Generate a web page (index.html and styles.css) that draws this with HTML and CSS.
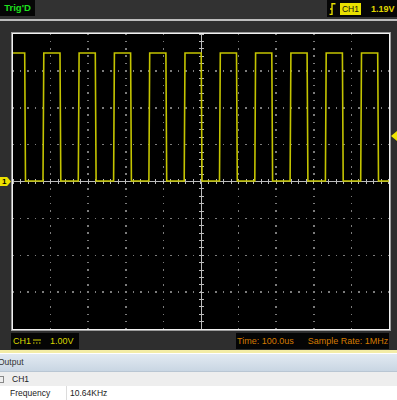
FILE: index.html
```html
<!DOCTYPE html>
<html lang="en">
<head>
  <meta charset="UTF-8">
  <title>Oscilloscope</title>
  <link rel="stylesheet" href="styles.css">
</head>
<body>

<div class="scope">
  <div class="topbar">
    <div class="trig">Trig'D</div>
    <div class="trigger-info">
      <svg class="edge-icon" width="7" height="12" viewBox="0 0 7 12">
        <path d="M0.5 11.5 H3 V0.8 H6.5" fill="none" stroke="#e8e000" stroke-width="1.4"/>
        <path d="M1 6 H3" stroke="#e8e000" stroke-width="1.4"/>
      </svg>
      <span class="ch-badge">CH1</span>
      <span class="level">1.19V</span>
    </div>
  </div>

  <div class="screen-area">
    <div class="screen">
      <div class="screen-inner">
        <svg class="grid" width="376" height="295" viewBox="0 0 376 295">
          <g stroke="#7c7c7c" stroke-width="1.5" shape-rendering="crispEdges">
            <g stroke-dasharray="1.5 5.875" stroke-dashoffset="0.75">
              <line x1="37.6" y1="0" x2="37.6" y2="295"/>
              <line x1="75.2" y1="0" x2="75.2" y2="295"/>
              <line x1="112.8" y1="0" x2="112.8" y2="295"/>
              <line x1="150.4" y1="0" x2="150.4" y2="295"/>
              <line x1="225.6" y1="0" x2="225.6" y2="295"/>
              <line x1="263.2" y1="0" x2="263.2" y2="295"/>
              <line x1="300.8" y1="0" x2="300.8" y2="295"/>
              <line x1="338.4" y1="0" x2="338.4" y2="295"/>
            </g>
            <g stroke-dasharray="1.5 6.02" stroke-dashoffset="0.75">
              <line x1="0" y1="36.9" x2="376" y2="36.9"/>
              <line x1="0" y1="73.75" x2="376" y2="73.75"/>
              <line x1="0" y1="110.6" x2="376" y2="110.6"/>
              <line x1="0" y1="184.4" x2="376" y2="184.4"/>
              <line x1="0" y1="221.25" x2="376" y2="221.25"/>
              <line x1="0" y1="258.1" x2="376" y2="258.1"/>
            </g>
          </g>
          <!-- center axes with minor ticks -->
          <g stroke="#bcbcbc" shape-rendering="crispEdges">
            <line x1="0" y1="147.5" x2="376" y2="147.5" stroke-width="1"/>
            <line x1="188" y1="0" x2="188" y2="295" stroke-width="1"/>
            <line x1="0" y1="147.5" x2="376" y2="147.5" stroke-width="5" stroke-dasharray="1 6.52" stroke-dashoffset="0.5"/>
            <line x1="188" y1="0" x2="188" y2="295" stroke-width="5" stroke-dasharray="1 6.375" stroke-dashoffset="0.5"/>
          </g>
          <path class="wave" d="M0,19 H11.7 L12.5,147 H30 L30.8,19 H47 L47.8,147 H65.3 L66.1,19 H82.3 L83.1,147 H100.6 L101.4,19 H117.6 L118.4,147 H135.9 L136.7,19 H152.9 L153.7,147 H171.2 L172,19 H188.2 L189,147 H206.5 L207.3,19 H223.5 L224.3,147 H241.8 L242.6,19 H258.8 L259.6,147 H277.1 L277.9,19 H294.1 L294.9,147 H312.4 L313.2,19 H329.4 L330.2,147 H347.7 L348.5,19 H364.7 L365.5,147 H376"/>
        </svg>
      </div>
    </div>
    <span class="ch-marker">1</span>
    <span class="trig-marker"></span>
  </div>

  <div class="readouts">
    <div class="ch-scale">
      <span>CH1</span>
      <svg class="dc-icon" width="8" height="5" viewBox="0 0 8 5">
        <line x1="0" y1="1" x2="8" y2="1" stroke="#d8d800" stroke-width="1"/>
        <line x1="0" y1="4" x2="8" y2="4" stroke="#d8d800" stroke-width="1" stroke-dasharray="1.5 1.5"/>
      </svg>
      <span class="volts">1.00V</span>
    </div>
    <div class="timebase">
      <span>Time: 100.0us</span>
      <span>Sample Rate: 1MHz</span>
    </div>
  </div>
</div>

<div class="output">
  <div class="output-head">Output</div>
  <div class="row group-row">
    <span class="collapse-box"></span>
    <span>CH1</span>
  </div>
  <div class="row prop-row">
    <span class="prop-name">Frequency</span>
    <span class="prop-value">10.64KHz</span>
  </div>
</div>

</body>
</html>
```

FILE: styles.css
```css
body {
  margin: 0;
  width: 397px;
  height: 400px;
  overflow: hidden;
  background: #fff;
  font-family: "Liberation Sans", Arial, sans-serif;
}

.scope {
  background: #2e2e2e;
  height: 350px;
  display: flex;
  flex-direction: column;
}

.topbar {
  height: 19px;
  display: flex;
  justify-content: space-between;
  align-items: flex-start;
  background: #323232;
  border-bottom: 2px solid #bdbdbd;
}

.trig {
  width: 35px;
  height: 16px;
  line-height: 16px;
  background: #060606;
  color: #1ee01e;
  font-size: 9.5px;
  font-weight: bold;
  text-align: center;
}

.trigger-info {
  width: 70px;
  height: 17px;
  background: #060606;
  display: flex;
  align-items: center;
  padding-left: 2px;
  box-sizing: border-box;
}

.edge-icon {
  display: block;
}

.ch-badge {
  margin-left: 4px;
  width: 21px;
  height: 12px;
  line-height: 12px;
  background: #e8e000;
  color: #111;
  font-size: 8.5px;
  text-align: center;
}

.level {
  margin-left: 10px;
  color: #e0d800;
  font-size: 9px;
  font-weight: bold;
}

.screen-area {
  position: relative;
  padding: 11px 0 0 11px;
}

.screen {
  width: 378px;
  border: 1px solid #9c9c9c;
}

.screen-inner {
  border: 1px solid #f2f2f2;
  background: #000;
  height: 295px;
}

.grid {
  display: block;
}

.wave {
  fill: none;
  stroke: #c4c400;
  stroke-width: 1.6;
}

.ch-marker {
  position: absolute;
  left: 0;
  top: 156px;
  width: 11px;
  height: 9px;
  line-height: 9px;
  background: #ece000;
  color: #000;
  font-size: 8px;
  font-weight: bold;
  text-indent: 2px;
  clip-path: polygon(0 0, 65% 0, 100% 50%, 65% 100%, 0 100%);
}

.trig-marker {
  position: absolute;
  right: 0;
  top: 110px;
  width: 0;
  height: 0;
  border-top: 5px solid transparent;
  border-bottom: 5px solid transparent;
  border-right: 6px solid #f0e400;
}

.readouts {
  display: flex;
  justify-content: space-between;
  margin: 2px 8px 0 11px;
  height: 16px;
  font-size: 9px;
}

.ch-scale {
  width: 68px;
  background: #050505;
  color: #d8d800;
  display: flex;
  align-items: center;
  padding-left: 2px;
  box-sizing: border-box;
}

.dc-icon {
  margin-left: 2px;
}

.volts {
  margin-left: 9px;
}

.timebase {
  width: 152px;
  background: #050505;
  color: #d47a00;
  display: flex;
  align-items: center;
  padding-left: 1px;
  gap: 14px;
}

.output {
  border-top: 3px solid #f3eca6;
  font-size: 8.5px;
  color: #222;
}

.output-head {
  margin-top: 1px;
  height: 17px;
  line-height: 17px;
  text-indent: -2px;
  background: linear-gradient(#e2eaf2, #c9d6e3);
  border-bottom: 1px solid #b9c6d3;
  color: #333;
}

.row {
  height: 14px;
  display: flex;
  align-items: center;
}

.group-row {
  background: #eeeeee;
}

.collapse-box {
  width: 5px;
  height: 5px;
  margin-left: -3px;
  margin-right: 8px;
  border: 1px solid #888;
}

.prop-row {
  background: #fff;
  border-bottom: 1px solid #e2e2e2;
}

.prop-name {
  width: 56px;
  height: 14px;
  line-height: 14px;
  padding-left: 10px;
  border-right: 1px solid #dcdcdc;
}

.prop-value {
  padding-left: 3px;
}
```
